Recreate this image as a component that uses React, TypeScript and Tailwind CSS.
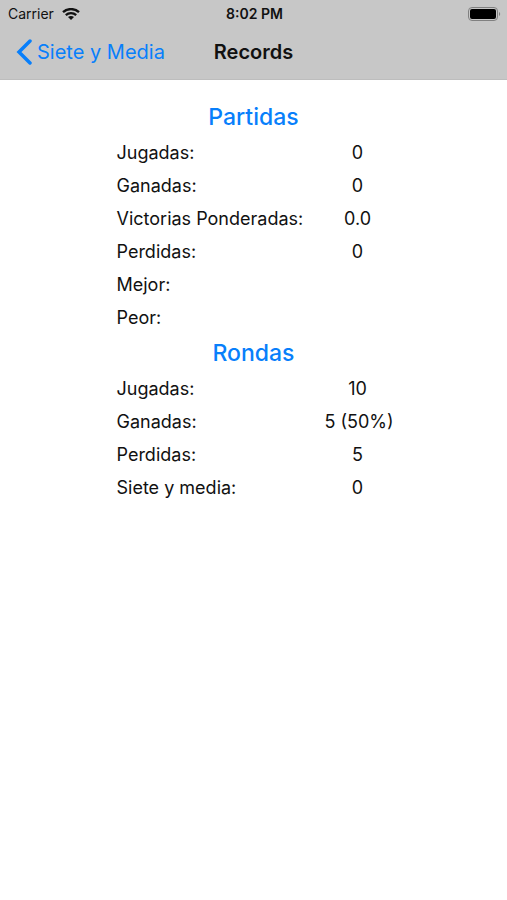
type Row = { label: string; value: string };

const partidas: Row[] = [
  { label: 'Jugadas:', value: '0' },
  { label: 'Ganadas:', value: '0' },
  { label: 'Victorias Ponderadas:', value: '0.0' },
  { label: 'Perdidas:', value: '0' },
  { label: 'Mejor:', value: '' },
  { label: 'Peor:', value: '' },
];

const rondas: Row[] = [
  { label: 'Jugadas:', value: '10' },
  { label: 'Ganadas:', value: '5 (50%)' },
  { label: 'Perdidas:', value: '5' },
  { label: 'Siete y media:', value: '0' },
];

function StatusBar() {
  return (
    <div className="grid h-7 grid-cols-[1fr_auto_1fr] items-center pr-1.5 pl-2 text-sm text-[#111]">
      <div className="flex items-center gap-2">
        <span>Carrier</span>
        <svg className="h-3 w-[18px]" viewBox="0 0 18 12" fill="none" stroke="currentColor" strokeWidth="2.3" aria-hidden="true">
          <path d="M1 4.2C5.4 0 12.6 0 17 4.2" />
          <path d="M3.8 7.1C6.7 4.4 11.3 4.4 14.2 7.1" />
          <path d="M6 9.1C7.7 7.5 10.3 7.5 12 9.1L9 12Z" fill="currentColor" stroke="none" />
        </svg>
      </div>
      <span className="text-center font-semibold">8:02 PM</span>
      <svg className="h-[14px] w-[33px] justify-self-end" viewBox="0 0 33 14" aria-hidden="true">
        <rect x="0.5" y="0.5" width="29" height="13" rx="3.5" fill="none" stroke="#808080" />
        <rect x="2" y="2" width="26" height="10" rx="2" fill="#000" />
        <path d="M31 5C32.6 5.6 32.6 8.4 31 9Z" fill="#808080" />
      </svg>
    </div>
  );
}

function Section({ title, rows }: { title: string; rows: Row[] }) {
  return (
    <section>
      <h2 className="h-[38px] text-center text-[23px] leading-[38px] font-medium text-[#087ffb]">{title}</h2>
      <table className="w-full table-fixed border-collapse text-lg">
        <tbody>
          {rows.map((row) => (
            <tr key={row.label} className="h-[33px]">
              <th scope="row" className="w-[208px] p-0 text-left font-normal whitespace-nowrap">{row.label}</th>
              <td className="p-0 text-center whitespace-nowrap">{row.value}</td>
            </tr>
          ))}
        </tbody>
      </table>
    </section>
  );
}

export default function App() {
  return (
    <div className="min-h-screen bg-white font-['Inter','Liberation_Sans',sans-serif] text-[#111]">
      <header className="border-b border-[#bdbdbd] bg-[#c7c7c7]">
        <StatusBar />
        <nav className="grid h-[51px] grid-cols-[1fr_auto_1fr] items-center px-4 pb-[3px]">
          <a href="#" className="flex items-center gap-1 text-xl whitespace-nowrap text-[#087ffb]">
            <svg className="h-[26px] w-[17px]" viewBox="0 0 17 26" fill="none" stroke="currentColor" strokeWidth="3.5" strokeLinecap="round" aria-hidden="true">
              <path d="M14 2L3 13L14 24" />
            </svg>
            Siete y Media
          </a>
          <h1 className="text-xl font-semibold text-[#111]">Records</h1>
        </nav>
      </header>
      <main className="mx-auto w-[274px] pt-[18px]">
        <Section title="Partidas" rows={partidas} />
        <Section title="Rondas" rows={rondas} />
      </main>
    </div>
  );
}
